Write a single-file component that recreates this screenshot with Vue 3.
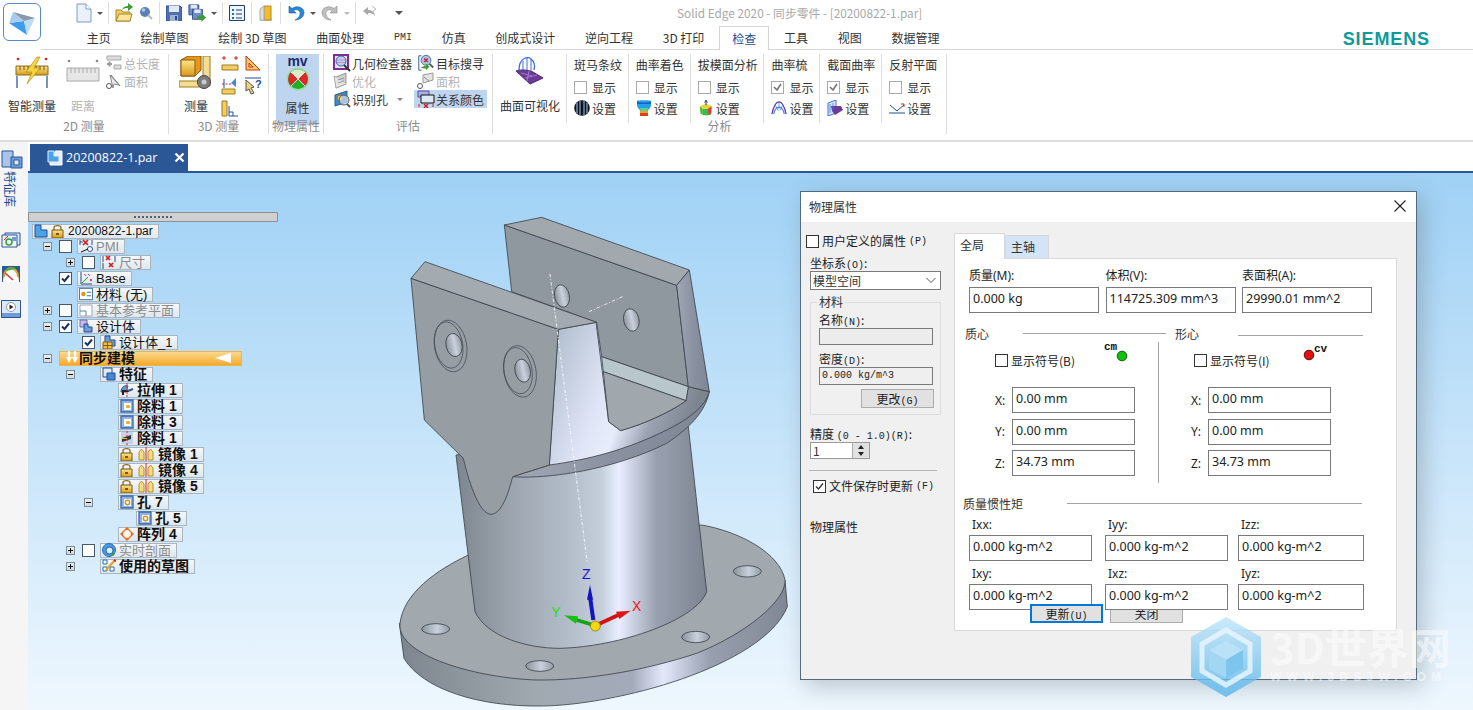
<script setup>
const tabs = ['主页', '绘制草图', '绘制 3D 草图', '曲面处理', 'PMI', '仿真', '创成式设计', '逆向工程', '3D 打印', '检查', '工具', '视图', '数据管理']

const subs = [
  { title: '斑马条纹', w: 62, icon: 'zebra', on: false },
  { title: '曲率着色', w: 62, icon: 'cone', on: false },
  { title: '拔模面分析', w: 74, icon: 'draft', on: false },
  { title: '曲率梳', w: 56, icon: 'comb', on: true },
  { title: '截面曲率', w: 62, icon: 'section', on: true },
  { title: '反射平面', w: 64, icon: 'reflect', on: false }
]

const rows = [
  { i: 0, flat: true, label: '20200822-1.par', icons: ['t-root', 't-lock'] },
  { i: 11, exp: '-', chk: 0, label: 'PMI', dim: true, icons: ['t-pmi'] },
  { i: 34, exp: '+', chk: 0, label: '尺寸', dim: true, icons: ['t-dim'] },
  { i: 11, chk: 1, label: 'Base', icons: ['t-base'] },
  { i: 11, label: '材料 (无)', icons: ['t-mat'] },
  { i: 11, exp: '+', chk: 0, label: '基本参考平面', dim: true, icons: ['t-plane'] },
  { i: 11, exp: '-', chk: 1, label: '设计体', icons: ['t-body'] },
  { i: 34, chk: 1, label: '设计体_1', icons: ['t-body1'] },
  { i: 11, exp: '-', sync: true, label: '同步建模', icons: ['t-sync'] },
  { i: 34, exp: '-', label: '特征', bold: true, icons: ['t-feat'] },
  { i: 52, label: '拉伸 1', bold: true, icons: ['t-ext'] },
  { i: 52, label: '除料 1', bold: true, icons: ['t-cut'] },
  { i: 52, label: '除料 3', bold: true, icons: ['t-cut'] },
  { i: 52, label: '除料 1', bold: true, icons: ['t-cut2'] },
  { i: 52, label: '镜像 1', bold: true, icons: ['t-lock', 't-mir'] },
  { i: 52, label: '镜像 4', bold: true, icons: ['t-lock', 't-mir'] },
  { i: 52, label: '镜像 5', bold: true, icons: ['t-lock', 't-mir'] },
  { i: 52, exp: '-', label: '孔 7', bold: true, icons: ['t-hole'] },
  { i: 70, label: '孔 5', bold: true, icons: ['t-hole'] },
  { i: 52, label: '阵列 4', bold: true, icons: ['t-arr'] },
  { i: 34, exp: '+', chk: 0, label: '实时剖面', dim: true, icons: ['t-live'] },
  { i: 34, exp: '+', label: '使用的草图', bold: true, icons: ['t-sk'] }
]

const coords = [
  { k: 'X:', v: '0.00 mm' },
  { k: 'Y:', v: '0.00 mm' },
  { k: 'Z:', v: '34.73 mm' }
]
</script>

<template>
  <div class="app">
    <svg class="defs" width="0" height="0">
      <defs>
        <linearGradient id="cyl" x1="0" x2="1" y1="0" y2="0">
          <stop offset="0" stop-color="#7d858e" />
          <stop offset=".2" stop-color="#9aa3ac" />
          <stop offset=".45" stop-color="#b3bdc9" />
          <stop offset=".58" stop-color="#c5cedb" />
          <stop offset=".65" stop-color="#e8eeff" />
          <stop offset=".8" stop-color="#99a1b1" />
          <stop offset="1" stop-color="#7c8490" />
        </linearGradient>
        <linearGradient id="hole" x1="0" x2="1" y1="0" y2="0">
          <stop offset="0" stop-color="#8b939c" />
          <stop offset=".55" stop-color="#c9d1dc" />
          <stop offset="1" stop-color="#939ba5" />
        </linearGradient>
        <linearGradient id="edge" x1="0" x2="1" y1="0" y2="0">
          <stop offset="0" stop-color="#7d858e" />
          <stop offset=".35" stop-color="#a0a8b0" />
          <stop offset=".6" stop-color="#a3abbb" />
          <stop offset=".68" stop-color="#e3e9fb" />
          <stop offset=".8" stop-color="#98a0b0" />
          <stop offset="1" stop-color="#808895" />
        </linearGradient>
        <linearGradient id="wedge" x1="0" x2="1" y1="0" y2=".35">
          <stop offset="0" stop-color="#abb8c8" />
          <stop offset=".45" stop-color="#dfe5f6" />
          <stop offset=".6" stop-color="#e8edfc" />
          <stop offset=".78" stop-color="#9ca4b4" />
          <stop offset="1" stop-color="#7c8490" />
        </linearGradient>
        <linearGradient id="side" x1="0" x2="1" y1="0" y2="0">
          <stop offset="0" stop-color="#a0a8b4" />
          <stop offset=".5" stop-color="#8a92a2" />
          <stop offset="1" stop-color="#7e8694" />
        </linearGradient>
        <linearGradient id="amber" x1="0" x2="0" y1="0" y2="1">
          <stop offset="0" stop-color="#fde48a" />
          <stop offset="1" stop-color="#d99a1c" />
        </linearGradient>
        <linearGradient id="hexfill" x1="0" x2="0" y1="0" y2="1">
          <stop offset="0" stop-color="#bfe4f9" />
          <stop offset="1" stop-color="#55b5ea" />
        </linearGradient>

        <symbol id="doc" viewBox="0 0 16 20"><path d="M1 1h9l5 5v13H1z" fill="#eaf1fb" stroke="#7f9cc4" /><path d="M10 1v5h5" fill="#fff" stroke="#7f9cc4" /></symbol>
        <symbol id="open" viewBox="0 0 18 20"><path d="M1 18V7h5l2 2h7v9z" fill="#f3cd62" stroke="#a8842c" /><path d="M1 18l3-7h13l-2 7z" fill="#fae59a" stroke="#a8842c" /><path d="M7 7c1-3 3-4 6-4V0l5 4-5 4V5c-2 0-4 0-6 2z" fill="#3c9d34" /></symbol>
        <symbol id="ball" viewBox="0 0 14 16"><circle cx="6" cy="7" r="5" fill="#5b7fb6" /><circle cx="4.500" cy="5" r="1.800" fill="#b6cbe8" /><path d="M9 10l4 4" stroke="#b8b8b8" stroke-width="2" /></symbol>
        <symbol id="save" viewBox="0 0 16 16"><path d="M0 1h14l2 2v13H0z" fill="#4e6fb0" stroke="#2e4a88" /><path d="M3 1h10v6H3z" fill="#dfe9f8" /><path d="M4 10h8v6H4z" fill="#9cb1d4" /><path d="M9 11h2v4H9z" fill="#2e4a88" /></symbol>
        <symbol id="saves" viewBox="0 0 20 20"><path d="M1 1h11v11H1z" fill="#6f8cc4" stroke="#2e4a88" /><path d="M3 1h7v4H3z" fill="#dfe9f8" /><path d="M5 6h11v11H5z" fill="#6f8cc4" stroke="#2e4a88" /><path d="M7 6h7v4H7z" fill="#dfe9f8" /><path d="M10 13h5v-3l5 5-5 5v-3h-5z" fill="#3c9d34" /></symbol>
        <symbol id="list" viewBox="0 0 16 16"><path d="M.5.500h15v15H.5z" fill="#eef4fb" stroke="#1e3f70" /><path d="M3 4h2v2H3zM3 8h2v2H3zM3 12h2v2H3z" fill="#1e6fb0" /><path d="M7 5h6M7 9h6M7 13h6" stroke="#1e3f70" /></symbol>
        <symbol id="door" viewBox="0 0 16 16"><path d="M2 15h12" stroke="#999" /><path d="M6 1h7v14H6z" fill="#f2bd2c" stroke="#b4871c" /><path d="M6 1L2 4v11l4 0z" fill="#ddd" stroke="#aaa" /></symbol>
        <symbol id="undo" viewBox="0 0 18 16"><path d="M2 1v7h7L6.500 5.500C10 3.500 14 6 13 9.500 12.500 12 10 14 8 15c5 0 9-3 9-7.500C17 2.500 10 0 5 3.500z" fill="#2b86d8" stroke="#1a5ca0" stroke-width=".6" /></symbol>
        <symbol id="redo" viewBox="0 0 18 16"><path d="M16 1v7H9l2.500-2.500C8 3.500 4 6 5 9.500 5.500 12 8 14 10 15c-5 0-9-3-9-7.500C1 2.500 8 0 13 3.500z" fill="#bfbfbf" stroke="#8c8c8c" stroke-width=".6" /></symbol>
        <symbol id="undo2" viewBox="0 0 16 16"><path d="M1 6l5-4v3c4 0 7 2 7 6-1-2-3-3-7-3v2z" fill="#a8a8a8" /><path d="M10 1l4 3-4 3" fill="none" stroke="#bbb" /></symbol>

        <symbol id="smart" viewBox="0 0 34 34"><circle cx="3" cy="3" r="1.300" fill="#c22" /><circle cx="31" cy="3" r="1.300" fill="#c22" /><path d="M1 10h32v9H1z" fill="url(#amber)" stroke="#8a6d1e" /><path d="M5 10v4M9 10v4M13 10v4M17 10v4M21 10v4M25 10v4M29 10v4" stroke="#6b5415" /><path d="M2 20v12M32 20v12" stroke="#1f4e93" stroke-width="1.200" /><path d="M22 1L11 16h6l-5 12 13-16h-6l6-11z" fill="#f6d43a" stroke="#a7841a" stroke-width=".6" /></symbol>
        <symbol id="ruler" viewBox="0 0 34 34"><circle cx="3" cy="5" r="1.300" fill="#888" /><circle cx="31" cy="5" r="1.300" fill="#888" /><path d="M1 12h32v13H1z" fill="#e6e6e6" stroke="#a8a8a8" /><path d="M5 12v5M9 12v5M13 12v5M17 12v5M21 12v5M25 12v5M29 12v5" stroke="#aaa" /></symbol>
        <symbol id="total" viewBox="0 0 16 16"><path d="M1 1h14v4H1zM8 10h7v4H8z" fill="#ddd" stroke="#aaa" /><path d="M1 9h5M3.500 6.500v5" stroke="#999" stroke-width="2" /></symbol>
        <symbol id="area" viewBox="0 0 16 16"><path d="M5 2L14 13" stroke="#777" /><path d="M4 2l9 10-5-1-1 4z" fill="#eee" stroke="#888" /><circle cx="3" cy="13" r="2.500" fill="#fff" stroke="#555" /></symbol>
        <symbol id="m3d" viewBox="0 0 34 34"><path d="M2 4l7-4h13v14l-6 6H2z" fill="#e8951d" stroke="#8c5b10" /><path d="M2 4h14v16H2z" fill="url(#amber)" stroke="#8c5b10" /><path d="M24 0h7v30H24z" fill="#f4dc93" stroke="#9c7a1c" /><path d="M0 25h24v6H0z" fill="#f4dc93" stroke="#9c7a1c" /><circle cx="25" cy="26" r="6.500" fill="#7d7d7d" stroke="#444" /><circle cx="25" cy="26" r="2.500" fill="#ccc" /></symbol>
        <symbol id="m1" viewBox="0 0 18 18"><path d="M1 4h4M13 4h4M3 2v4M15 2v4" stroke="#c22" /><path d="M1 11h16v5H1z" fill="#f3cd62" stroke="#9c7a1c" /></symbol>
        <symbol id="m2" viewBox="0 0 18 18"><path d="M2 2v14h14zM5 9v4h4z" fill="#f3cd62" stroke="#c83020" /></symbol>
        <symbol id="m3" viewBox="0 0 18 18"><path d="M1 7h10" stroke="#c22" stroke-dasharray="2 1.500" /><path d="M3 2v9" stroke="#1f4e93" /><path d="M15 1l-5 5 5 4z" fill="#3c8ad8" /><path d="M1 12h13v5H1z" fill="#f3cd62" stroke="#9c7a1c" /></symbol>
        <symbol id="m4" viewBox="0 0 18 18"><path d="M1 1h16" stroke="#1f4e93" /><path d="M2 3l8 7-3 1 3 5-3 1-2-5-3 2z" fill="#ead17a" stroke="#555" /><text x="11" y="11" font-size="11" font-weight="700" fill="#1f4e93" font-family="Liberation Sans">?</text></symbol>
        <symbol id="m5" viewBox="0 0 18 18"><path d="M1 1h5v15H1z" fill="#f3cd62" stroke="#9c7a1c" /><path d="M8 6v10h9M8 12h4v4" fill="none" stroke="#1f4e93" /></symbol>
        <symbol id="inspect" viewBox="0 0 18 18"><path d="M0 0h16v16H0z" fill="#7d2f8e" /><path d="M2 2h12v12H2z" fill="#dfe7f4" /><circle cx="8" cy="7" r="5" fill="#bcd2ee" stroke="#3c66a8" /><path d="M4 6h8M4 8.500h8" stroke="#d68ac9" /><path d="M11 11l6 6" stroke="#333" stroke-width="2" /></symbol>
        <symbol id="target" viewBox="0 0 18 20"><path d="M1 2h3M1 2v16h3" fill="none" stroke="#1f4e93" /><circle cx="9" cy="7" r="5.500" fill="#aac3e3" stroke="#46688f" /><path d="M7 5l4 4M11 5l-4 4" stroke="#c22" stroke-width="1.500" /><path d="M13 11l4 4" stroke="#555" stroke-width="2" /><path d="M3 15c3-1 4-2 6-2v-2l4 3-4 4v-2c-2 0-4 0-6-1z" fill="#3c9d34" /></symbol>
        <symbol id="opt" viewBox="0 0 18 18"><path d="M3 5l10-4v11L3 16z" fill="#ccc" stroke="#999" /><path d="M3 5l-2-1 2 12 10-4" fill="#e4e4e4" stroke="#aaa" /><path d="M5 8l6-2M5 11l6-2" stroke="#999" /></symbol>
        <symbol id="area2" viewBox="0 0 18 18"><path d="M6 3l10-2v7L6 11z" fill="#e4e4e4" stroke="#999" /><path d="M7 5l5 4" stroke="#888" /><circle cx="3" cy="14" r="2.500" fill="#fff" stroke="#555" /></symbol>
        <symbol id="ident" viewBox="0 0 18 18"><path d="M2 5l12-4v11L2 16z" fill="#3d8bd0" stroke="#245c90" /><circle cx="7" cy="8" r="3" fill="#f0c040" stroke="#a07010" /><circle cx="11" cy="10" r="5" fill="#cfe0f5" fill-opacity=".7" stroke="#555" /><path d="M14 14l3 3" stroke="#555" stroke-width="2" /></symbol>
        <symbol id="rel" viewBox="0 0 18 18"><path d="M1 1h11v6H1z" fill="#a3b4e0" stroke="#5a4aa8" /><path d="M4 5h13v8H4z" fill="#dfe7f4" stroke="#111" /><path d="M7 14l4 4M11 14l-4 4" stroke="#c22" stroke-width="1.500" /><path d="M2 14v3M16 14v3" stroke="#c22" /></symbol>
        <symbol id="mv" viewBox="0 10 24 24"><circle cx="12" cy="22" r="11.500" fill="#7fe07f" fill-opacity=".55" /><circle cx="12" cy="22" r="10" fill="#22b022" /><path d="M12 22L5 15A10 10 0 0 1 19 15z" fill="#dcecc8" /><path d="M12 22L5 15A10 10 0 0 0 5 29zM12 22L19 15A10 10 0 0 1 19 29z" fill="#dc2a2a" /><path d="M5 15l14 14M19 15L5 29" stroke="#f4e8e8" stroke-width="1" /></symbol>
        <symbol id="surf" viewBox="0 0 30 30"><path d="M4 14C4 1 14 0 16 3c4 3 4 7 3 11" fill="none" stroke="#3d6ee0" stroke-width="1.300" /><path d="M8 5v12M12 2v15M16 3v13" stroke="#3d6ee0" /><path d="M1 15c6-2 12-1 17 1l10 6-13 6C10 24 6 19 1 15z" fill="#6b3a9a" stroke="#4a2a70" /><path d="M6 17l11 3 M10 22l12-3M14 15l-2 10" stroke="#9f7fc4" /></symbol>
        <symbol id="zebra" viewBox="0 0 16 16"><circle cx="8" cy="8" r="7.800" fill="#111" /><path d="M3 2.500v11M6 1v14M10 1v14M13 2.500v11" stroke="#7ea4d0" stroke-width="1.300" /></symbol>
        <symbol id="cone" viewBox="0 0 16 16"><path d="M1 1c0-1 14-1 14 0v4c0 3-3 4-3 6H4C4 9 1 8 1 5z" fill="#24a0e8" /><path d="M1 1c2 2 12 2 14 0v3H1z" fill="#1464c8" /><path d="M4 8h8l-.5 3h-7z" fill="#5cd08c" /><path d="M4 11h8v2H4z" fill="#f0a020" /><path d="M4 13h8v3H4z" fill="#d84020" /></symbol>
        <symbol id="draft" viewBox="0 0 16 18"><path d="M1 7l7-3 7 3-1 9-6 2-6-3z" fill="#e6d83a" /><path d="M1 7l3 3v7l-2-2z" fill="#3cc040" /><path d="M4 10h10l-1 7H4z" fill="#2fbe5a" /><path d="M10 10l4-3v8l-3 2z" fill="#e03a3a" /><path d="M8 6V1M6.500 3L8 0l1.500 3" stroke="#113a80" fill="none" /></symbol>
        <symbol id="comb" viewBox="0 0 18 16"><path d="M1 15C3 5 6 1 9 1s6 4 8 14" fill="none" stroke="#5a3ab0" stroke-width="1.400" /><path d="M3 15c1-5 3-8 6-8s5 3 6 8" fill="none" stroke="#4a8ae0" stroke-width="1.300" /><path d="M5 5l3 6M13 5l-3 6M9 1v8" stroke="#3d6ee0" stroke-width=".8" /></symbol>
        <symbol id="section" viewBox="0 0 16 16"><path d="M1 3l8-3v13l-8 3z" fill="#d8e6f8" stroke="#3d6ee0" /><path d="M4 6l10 0 2 4-8 5-3-4z" fill="#6b3a9a" /><path d="M3 4v9M6 3v9" stroke="#3d6ee0" stroke-width=".8" /></symbol>
        <symbol id="reflect" viewBox="0 0 16 16"><path d="M0 13h16" stroke="#1f4e93" /><path d="M1 5l7 6 7-6" fill="none" stroke="#1f4e93" /><path d="M12 4l3 0 0 3" fill="none" stroke="#c22" /></symbol>

        <symbol id="r-feat" viewBox="0 0 22 20"><path d="M1 1h11v16H1z" fill="#a9c4e8" stroke="#2b5797" /><path d="M10 7h11v11H10z" fill="#6f9bd8" stroke="#2b5797" /><path d="M13 10h5v5h-5z" fill="#e0ecfb" stroke="#2b5797" /></symbol>
        <symbol id="r-cam" viewBox="0 0 20 16"><path d="M4 1h15v12H4z" fill="#dbe8f8" stroke="#2b5797" /><path d="M1 3h15v12H1z" fill="#eef4fb" stroke="#2b5797" /><circle cx="8" cy="10" r="3" fill="none" stroke="#3c9d34" stroke-width="1.500" /><path d="M3 8l4-4" stroke="#c22" /><path d="M11 5h4v4h-4z" fill="#6f9bd8" /></symbol>
        <symbol id="r-gauge" viewBox="0 0 20 18"><path d="M1 1h18v16H1z" fill="#2b5797" /><path d="M2 17C2 8 6 4 10 4s8 4 8 13z" fill="#fff" /><path d="M3 12C3 6 7 3 10 3s7 3 7 9" fill="none" stroke="#e8a020" stroke-width="2" /><path d="M5 5L14 3" stroke="#3cb040" stroke-width="2" /><path d="M4 8l8 7" stroke="#d03030" stroke-width="1.500" /></symbol>
        <symbol id="r-play" viewBox="0 0 20 18"><path d="M.5.500h19v17H.5z" fill="#dbe8f8" stroke="#2b5797" /><path d="M1 13h18v4H1z" fill="#6f9bd8" /><circle cx="10" cy="7" r="4.500" fill="#fff" stroke="#999" /><path d="M8.500 4.500l4 2.500-4 2.500z" fill="#222" /></symbol>

        <symbol id="t-root" viewBox="0 0 14 14"><path d="M1 1h6v5h6v7H1z" fill="#4aa3e8" stroke="#1f4e93" /></symbol>
        <symbol id="t-lock" viewBox="0 0 14 14"><path d="M3 6V3.500C3 1 10 1 10 3.500V6" fill="none" stroke="#8a6a20" stroke-width="1.300" /><path d="M1 6h11v8H1z" fill="url(#amber)" stroke="#7a5a10" /><path d="M5 9h3v2H5z" fill="#7a5a10" /></symbol>
        <symbol id="t-pmi" viewBox="0 0 14 14"><path d="M1 1v5M1 3h3M13 1v5" stroke="#1f4e93" /><path d="M4 1l5 5M9 1L4 6" stroke="#d41a1a" stroke-width="1.700" /><circle cx="11" cy="10" r="2.500" fill="#fff" stroke="#1f4e93" /><path d="M2 13l7-3" stroke="#111" /></symbol>
        <symbol id="t-dim" viewBox="0 0 14 14"><path d="M1 1v6M13 1v6M1 8v6" stroke="#1f4e93" /><path d="M4 1l4 4M8 1L4 5M7 8l4 4M11 8l-4 4" stroke="#d41a1a" stroke-width="1.700" /></symbol>
        <symbol id="t-base" viewBox="0 0 14 14"><path d="M2 1v12h11" fill="none" stroke="#1f4e93" /><path d="M2 13l7-7" stroke="#3c9d34" /><path d="M5 3l2 2M9 3l2 2M11 8l2 2M13 8l-2 2" stroke="#c040c0" /></symbol>
        <symbol id="t-mat" viewBox="0 0 16 14"><path d="M.5.500h15v13H.5z" fill="#fff" stroke="#1f5f8f" /><circle cx="5" cy="7" r="2.500" fill="#e89020" /><path d="M9 5h5M9 9h5" stroke="#1f5f8f" /></symbol>
        <symbol id="t-plane" viewBox="0 0 14 14"><path d="M1 2h12v11H1z" fill="#fff" stroke="#9aa8b8" /><path d="M1 8h6v5" fill="none" stroke="#5b82b8" /></symbol>
        <symbol id="t-body" viewBox="0 0 14 14"><path d="M1 1h7v7H1z" fill="#c4bce8" stroke="#6f6ab0" /><path d="M5 5h4v3h4v5H5z" fill="#6f9bd8" stroke="#1f4e93" /></symbol>
        <symbol id="t-body1" viewBox="0 0 14 14"><path d="M3 1h5v4h5v6H3z" fill="#6f9bd8" stroke="#1f4e93" /><path d="M1 7h9v7H1z" fill="#f0c040" stroke="#8a5a10" /><path d="M5.500 7v7M1 10.500h9" stroke="#8a5a10" /></symbol>
        <symbol id="t-sync" viewBox="0 0 14 14"><path d="M4 0v7M10 0v7" stroke="#fff" stroke-width="2" /><path d="M1 6l3 6 3-6zM7 6l3 6 3-6z" fill="#fff" /></symbol>
        <symbol id="t-feat" viewBox="0 0 14 14"><path d="M1 1h9v9H1z" fill="#dfe9f8" stroke="#1f4e93" /><path d="M5 6h8v7H5z" fill="#4a86d8" stroke="#1f4e93" /></symbol>
        <symbol id="t-ext" viewBox="0 0 14 14"><path d="M1 9C1 3 6 2 8 3l-2 6H1z" fill="#5b9bd8" stroke="#2b5797" /><path d="M3 12V8h6" fill="none" stroke="#222" stroke-width="2" /><path d="M8 8l5-2" stroke="#2b5797" stroke-width="2" /><path d="M7 0v14" stroke="#e82020" stroke-dasharray="2 1" /></symbol>
        <symbol id="t-cut" viewBox="0 0 14 14"><path d="M1 1h12v12H1z" fill="#8eb3e4" stroke="#3a66a8" stroke-width="1.300" /><path d="M4 4h7v7H4z" fill="#fff" /><path d="M6 6h4v3H6z" fill="#e8b83a" /></symbol>
        <symbol id="t-cut2" viewBox="0 0 14 14"><path d="M1 1h12v12H1z" fill="#c4d4ea" /><path d="M2 7l9-3v4L2 11z" fill="#333" /><path d="M2 7h5v1H2z" fill="#e8b83a" /><path d="M7 0v14" stroke="#e82020" stroke-dasharray="2 2" /></symbol>
        <symbol id="t-mir" viewBox="0 0 16 14"><path d="M1 13V5l2.500-3L6 5v8zM10 13V5l2.500-3L15 5v8z" fill="#f5dc80" stroke="#a07c1c" stroke-width=".8" /><path d="M8 0v14" stroke="#e82020" /></symbol>
        <symbol id="t-hole" viewBox="0 0 14 14"><path d="M1 1h12v12H1z" fill="#8eb3e4" stroke="#3a66a8" stroke-width="1.300" /><path d="M4 4h7v7H4z" fill="#fff" /><circle cx="7.500" cy="7.500" r="2.200" fill="none" stroke="#c89a24" stroke-width="1.500" /></symbol>
        <symbol id="t-arr" viewBox="0 0 14 14"><path d="M7 1l6 6-6 6-6-6z" fill="#fff5e8" stroke="#e0702a" stroke-width="1.300" /><circle cx="7" cy="2" r="1.300" fill="#e0702a" /><circle cx="7" cy="12" r="1.300" fill="#e0702a" /><circle cx="2" cy="7" r="1.300" fill="#e0702a" /><circle cx="12" cy="7" r="1.300" fill="#e0702a" /></symbol>
        <symbol id="t-live" viewBox="0 0 14 14"><circle cx="7" cy="7" r="6.500" fill="#4a9ae0" stroke="#2b6fb0" /><circle cx="7.500" cy="7.500" r="3.500" fill="#dff0fb" stroke="#1f5f9f" /><circle cx="11" cy="11" r="1.500" fill="#30a040" /></symbol>
        <symbol id="t-sk" viewBox="0 0 14 14"><path d="M1 1h4v4H1zM1 8h4v4H1zM8 8h4v4H8z" fill="#fff" stroke="#1f6fb8" /><path d="M4 11L13 1" stroke="#e8a020" stroke-width="2" /><path d="M12 1l2 1" stroke="#c22" stroke-width="2" /></symbol>
      </defs>
    </svg>

    <header class="top">
      <div class="logo">
        <svg width="30" height="30" viewBox="0 0 30 30">
          <path d="M2 16l15-2 3 14z" fill="#3c9bec" />
          <path d="M6 5l11 9-15 2z" fill="#a9cdf0" />
          <path d="M17 14l11-3-8 17z" fill="#bcdcf6" />
          <path d="M6 5l22 6-11 3z" fill="#8a97a8" />
        </svg>
      </div>
      <div class="top-main">
        <div class="qat">
          <svg class="q" width="16" height="20"><use href="#doc" /></svg><i class="dd" />
          <b class="qs" />
          <svg class="q" width="18" height="20"><use href="#open" /></svg>
          <svg class="q" width="14" height="16"><use href="#ball" /></svg>
          <b class="qs" />
          <svg class="q" width="16" height="16"><use href="#save" /></svg>
          <svg class="q" width="18" height="18"><use href="#saves" /></svg><i class="dd" />
          <b class="qs" />
          <svg class="q" width="16" height="16"><use href="#list" /></svg>
          <b class="qs" />
          <svg class="q" width="16" height="16"><use href="#door" /></svg>
          <b class="qs" />
          <svg class="q" width="18" height="16"><use href="#undo" /></svg><i class="dd" />
          <svg class="q" width="18" height="16"><use href="#redo" /></svg><i class="dd off" />
          <b class="qs" />
          <svg class="q" width="16" height="16"><use href="#undo2" /></svg>
          <i class="dd last" />
          <span class="title">Solid Edge 2020 - 同步零件 - [20200822-1.par]</span>
        </div>
        <nav class="tabs">
          <span v-for="t in tabs" :key="t" class="tab" :class="{ on: t === '检查', pmi: t === 'PMI' }">{{ t }}</span>
          <span class="siemens">SIEMENS</span>
        </nav>
      </div>
    </header>

    <section class="ribbon">
      <div class="group g2d">
        <div class="items">
          <div class="big"><svg width="34" height="34"><use href="#smart" /></svg><span>智能测量</span></div>
          <div class="big off w-dist"><svg width="34" height="34"><use href="#ruler" /></svg><span>距离</span></div>
          <div class="smalls off sm-2d">
            <div class="sm"><svg width="16" height="16"><use href="#total" /></svg>总长度</div>
            <div class="sm"><svg width="16" height="16"><use href="#area" /></svg>面积</div>
          </div>
        </div>
        <div class="glabel">2D 测量</div>
      </div>

      <div class="group g3d">
        <div class="items">
          <div class="big"><svg width="34" height="34"><use href="#m3d" /></svg><span>测量</span></div>
          <div class="mini">
            <svg width="18" height="18"><use href="#m1" /></svg>
            <svg width="18" height="18"><use href="#m2" /></svg>
            <svg width="18" height="18"><use href="#m3" /></svg>
            <svg width="18" height="18"><use href="#m4" /></svg>
            <svg width="18" height="18"><use href="#m5" /></svg>
          </div>
        </div>
        <div class="glabel">3D 测量</div>
      </div>

      <div class="group gphy">
        <div class="items">
          <div class="big active">
            <em class="mv">mv</em>
            <svg width="24" height="24"><use href="#mv" /></svg>
            <span>属性</span>
          </div>
        </div>
        <div class="glabel">物理属性</div>
      </div>

      <div class="group geval">
        <div class="items">
          <div class="smalls">
            <div class="sm"><svg width="18" height="18"><use href="#inspect" /></svg>几何检查器</div>
            <div class="sm off"><svg width="18" height="18"><use href="#opt" /></svg>优化</div>
            <div class="sm"><svg width="18" height="18"><use href="#ident" /></svg>识别孔<i class="dd" /></div>
          </div>
          <div class="smalls col2">
            <div class="sm"><svg width="18" height="18"><use href="#target" /></svg>目标搜寻</div>
            <div class="sm off"><svg width="18" height="18"><use href="#area2" /></svg>面积</div>
            <div class="sm hl"><svg width="18" height="18"><use href="#rel" /></svg>关系颜色</div>
          </div>
        </div>
        <div class="glabel">评估</div>
      </div>

      <div class="group gana">
        <div class="items">
          <div class="sub first">
            <div class="big"><svg width="30" height="30"><use href="#surf" /></svg><span>曲面可视化</span></div>
          </div>
          <div v-for="s in subs" :key="s.title" class="sub" :style="{ width: s.w + 'px' }">
            <div class="sub-title">{{ s.title }}</div>
            <div class="sub-row">
              <span class="cb"><svg v-if="s.on" width="11" height="11" viewBox="0 0 11 11"><path d="M2 5l3 3 4-6" fill="none" stroke="#777" stroke-width="1.600" /></svg></span>显示
            </div>
            <div class="sub-row set"><svg width="16" height="16"><use :href="'#' + s.icon" /></svg>设置</div>
          </div>
        </div>
        <div class="glabel">分析</div>
      </div>
    </section>

    <main class="work">
      <aside class="rail">
        <svg width="22" height="20"><use href="#r-feat" /></svg>
        <div class="rail-txt">特征库</div>
        <svg class="rail-a" width="20" height="16"><use href="#r-cam" /></svg>
        <svg class="rail-b" width="20" height="18"><use href="#r-gauge" /></svg>
        <svg class="rail-b" width="20" height="18"><use href="#r-play" /></svg>
      </aside>

      <div class="doc">
        <div class="doc-tabs">
          <div class="doc-tab">
            <svg width="16" height="16" viewBox="0 0 16 16"><path d="M8 1h7v14H3v-4" fill="#e6edf6" stroke="#fff" /><path d="M1 1h6v5h5v6H1z" fill="#4aa3e8" stroke="#e6edf6" /></svg>
            <span>20200822-1.par</span>
            <svg class="x" width="11" height="11" viewBox="0 0 11 11"><path d="M1.500 1.500l8 8M9.500 1.500l-8 8" stroke="#fff" stroke-width="2.200" /></svg>
          </div>
        </div>

        <div class="canvas">
          <div class="handle"><i /></div>

          <div class="tree">
            <div v-for="(r, n) in rows" :key="n" class="row" :class="{ flat: r.flat }" :style="{ paddingLeft: r.i + 'px' }">
              <template v-if="!r.flat">
                <span class="exp" :class="{ none: !r.exp, plus: r.exp === '+' }" />
                <span class="chk" :class="{ none: r.chk === undefined }">
                  <svg v-if="r.chk" width="11" height="11" viewBox="0 0 11 11"><path d="M2 5.500l2.500 2.500L9 2.500" fill="none" stroke="#17335f" stroke-width="2" /></svg>
                </span>
              </template>
              <span class="node" :class="{ dim: r.dim, bold: r.bold, sync: r.sync }">
                <svg v-for="ic in r.icons" :key="ic" :width="ic === 't-mir' ? 18 : 14" height="14"><use :href="'#' + ic" /></svg>
                <span>{{ r.label }}</span>
                <i v-if="r.sync" class="arrow" />
              </span>
            </div>
          </div>

          <svg class="model" width="420" height="500" viewBox="0 0 1260 1500">
            <g stroke="#3c434a" stroke-width="2.500" stroke-linejoin="round">
              <path d="M58 1240L72 1345C130 1440 300 1490 480 1488C700 1488 1150 1370 1222 1190L1215 1110Z" fill="url(#edge)" />
              <path d="M60 1240C70 1150 170 1080 265 1035L965 945C1080 965 1200 1030 1215 1110C1220 1170 1100 1270 950 1330C800 1380 620 1412 470 1410C300 1405 50 1340 60 1240Z" fill="#a1a8ae" />
              <g fill="url(#hole)">
                <ellipse cx="1102" cy="1084" rx="42" ry="17" />
                <ellipse cx="167" cy="1257" rx="42" ry="16" />
                <ellipse cx="479" cy="1368" rx="42" ry="16" />
                <ellipse cx="947" cy="1281" rx="42" ry="17" />
              </g>
              <path d="M228 735L285 1205C320 1280 440 1315 540 1315C720 1310 950 1230 980 1145L925 650Z" fill="url(#cyl)" />
              <path d="M398 800C500 808 700 780 860 700C920 660 975 610 988 545L925 530L508 765Z" fill="url(#side)" />
              <path d="M535 358L648 337L686 635L722 662C800 640 880 600 918 572L925 530L988 545C975 590 930 625 860 660C740 720 620 750 508 765Z" fill="url(#wedge)" />
              <path d="M373 45L395 245L650 337L665 440L925 530L890 226Z" fill="#8f989e" />
              <path d="M373 45L485 22L928 180L890 226Z" fill="#a2a9ae" />
              <path d="M890 226L928 180L988 545L925 530Z" fill="url(#side)" />
              <path d="M665 440L925 530L918 572L670 485Z" fill="#b9c6cc" />
              <path d="M670 485L918 572C880 600 800 640 722 662L686 635Z" fill="#a0a8ad" />
              <path d="M93 205L133 630L250 745C270 830 300 912 333 913C365 912 385 850 398 800L508 765L535 358Z" fill="#969ea4" />
              <path d="M93 205L135 155L650 337L535 358Z" fill="#a4abb0" />
              <g fill="none" stroke-width="2">
                <ellipse cx="212" cy="408" rx="48" ry="78" transform="rotate(-10 212 408)" />
                <ellipse cx="206" cy="405" rx="42" ry="70" transform="rotate(-10 206 405)" />
                <ellipse cx="420" cy="484" rx="48" ry="78" transform="rotate(-10 420 484)" />
                <ellipse cx="414" cy="482" rx="42" ry="70" transform="rotate(-10 414 482)" />
              </g>
              <g fill="url(#hole)">
                <ellipse cx="222" cy="405" rx="24" ry="35" transform="rotate(-12 222 405)" />
                <ellipse cx="428" cy="482" rx="23" ry="35" transform="rotate(-12 428 482)" />
                <ellipse cx="546" cy="258" rx="22" ry="34" transform="rotate(-12 546 258)" />
                <ellipse cx="754" cy="330" rx="23" ry="34" transform="rotate(-12 754 330)" />
              </g>
            </g>
            <path d="M510 192L622 1060M627 305L732 258" stroke="#fff" stroke-width="2.500" stroke-dasharray="10 6 3 6" fill="none" />
            <path d="M640 1230L630 1160" stroke="#1414c0" stroke-width="12" />
            <path d="M630 1124l-9 45h18z" fill="#1414c0" />
            <path d="M640 1245L590 1230" stroke="#15a015" stroke-width="11" />
            <path d="M552 1216l42 3-6 22z" fill="#15c015" />
            <path d="M650 1245L715 1215" stroke="#d01414" stroke-width="11" />
            <path d="M752 1202l-44 3 10 22z" fill="#e01414" />
            <circle cx="646" cy="1248" r="15" fill="#f4d80c" stroke="#7a6a00" stroke-width="2" />
            <text x="606" y="1106" class="ax" fill="#1414d8">Z</text>
            <text x="514" y="1222" class="ax" fill="#18e018">Y</text>
            <text x="756" y="1204" class="ax" fill="#f01414">X</text>
          </svg>

          <div class="dlg">
            <div class="dlg-title">
              <span>物理属性</span>
              <svg width="14" height="14" viewBox="0 0 14 14"><path d="M1.500 1.500l11 11M12.500 1.500l-11 11" stroke="#222" stroke-width="1.100" /></svg>
            </div>
            <div class="dlg-body">
              <div class="side">
                <label class="lbl chk-line"><span class="box" />用户定义的属性<span class="m">(P)</span></label>
                <div class="lbl cs">坐标系<span class="m">(O)</span>:</div>
                <div class="select">模型空间
                  <svg width="12" height="7" viewBox="0 0 12 7"><path d="M1.500 1L6 5.500 10.500 1" fill="none" stroke="#555" /></svg>
                </div>
                <div class="mat">
                  <span class="legend">材料</span>
                  <div class="lbl">名称<span class="m">(N)</span>:</div>
                  <div class="ro n" />
                  <div class="lbl d">密度<span class="m">(D)</span>:</div>
                  <div class="ro v">0.000 kg/m^3</div>
                  <button class="btn chg">更改<span class="m">(G)</span></button>
                </div>
                <div class="lbl pr">精度 <span class="m">(0 - 1.0)(R)</span>:</div>
                <div class="spin">
                  <span>1</span>
                  <div class="arrows"><i class="u" /><i class="d" /></div>
                </div>
                <hr class="sep" />
                <label class="lbl chk-line save"><span class="box"><svg width="11" height="11" viewBox="0 0 11 11"><path d="M2 5.500l2.500 2.500L9 2.500" fill="none" stroke="#333" stroke-width="1.400" /></svg></span>文件保存时更新<span class="m">(F)</span></label>
                <div class="lbl hint">物理属性</div>
              </div>

              <div class="tabbed">
                <div class="ptabs">
                  <span class="ptab on">全局</span>
                  <span class="ptab">主轴</span>
                </div>
                <div class="panel">
                  <div class="trio">
                    <div><div class="flabel">质量(M):</div><div class="input">0.000 kg</div></div>
                    <div><div class="flabel">体积(V):</div><div class="input">114725.309 mm^3</div></div>
                    <div><div class="flabel">表面积(A):</div><div class="input">29990.01 mm^2</div></div>
                  </div>

                  <div class="heads">
                    <div class="head h1"><span>质心</span><i /></div>
                    <div class="head h2"><span>形心</span><i /></div>
                  </div>
                  <div class="centers">
                    <div class="cen left">
                      <div class="sym">
                        <label class="lbl chk-line"><span class="box" />显示符号(B)</label>
                        <svg width="26" height="24" viewBox="0 0 26 24"><text x="0" y="8" class="mk">cm</text><circle cx="18" cy="14" r="4.800" fill="#12c012" stroke="#0b5c0b" /></svg>
                      </div>
                      <div class="xyz">
                        <template v-for="c in coords" :key="c.k">
                          <span class="k">{{ c.k }}</span><div class="input">{{ c.v }}</div>
                        </template>
                      </div>
                    </div>
                    <div class="cen right">
                      <div class="sym">
                        <label class="lbl chk-line"><span class="box" />显示符号(I)</label>
                        <svg width="26" height="24" viewBox="0 0 26 24"><circle cx="6" cy="13" r="4.800" fill="#e01010" stroke="#5c0b0b" /><text x="11" y="10" class="mk">cv</text></svg>
                      </div>
                      <div class="xyz">
                        <template v-for="c in coords" :key="c.k">
                          <span class="k">{{ c.k }}</span><div class="input">{{ c.v }}</div>
                        </template>
                      </div>
                    </div>
                  </div>

                  <div class="head h3"><span>质量惯性矩</span><i /></div>
                  <div class="moments">
                    <div><div class="flabel">Ixx:</div><div class="input">0.000 kg-m^2</div></div>
                    <div><div class="flabel">Iyy:</div><div class="input">0.000 kg-m^2</div></div>
                    <div><div class="flabel">Izz:</div><div class="input">0.000 kg-m^2</div></div>
                    <div class="low"><div class="flabel">Ixy:</div><div class="input">0.000 kg-m^2</div></div>
                    <div class="low"><div class="flabel">Ixz:</div><div class="input">0.000 kg-m^2</div></div>
                    <div class="low"><div class="flabel">Iyz:</div><div class="input">0.000 kg-m^2</div></div>
                  </div>
                  <div class="actions">
                    <button class="btn act focus">更新<span class="m">(U)</span></button>
                    <button class="btn act">关闭</button>
                  </div>
                </div>
              </div>
            </div>
          </div>

          <div class="mark">
            <svg width="72" height="82" viewBox="0 0 72 82">
              <path d="M36 1l35 20v40L36 81 1 61V21z" fill="url(#hexfill)" fill-opacity=".8" />
              <path d="M36 14l24 14v27L36 69 12 55V28z" fill="none" stroke="#e6f5fd" stroke-opacity=".85" stroke-width="5" />
              <path d="M36 25l17 9-17 10-17-10z" fill="#b9e1f7" />
              <path d="M19 34l17 10v18l-17-9z" fill="#a3d6f3" />
              <path d="M53 34L36 44v18l17-9z" fill="#7cc5ec" />
            </svg>
            <div class="mark-txt">
              <div class="mark-a">3D世界网</div>
              <div class="mark-b">WWW.3DSJW.COM</div>
            </div>
          </div>
        </div>
      </div>
    </main>
  </div>
</template>

<style>
html, body { margin: 0; overflow: hidden; }
</style>

<style scoped>
.app {
  width: 1473px;
  height: 710px;
  display: flex;
  flex-direction: column;
  overflow: hidden;
  background: #fff;
  font-family: "Noto Sans CJK SC", sans-serif;
  font-size: 12px;
  color: #333;
}
.defs { position: absolute; }
svg { flex: none; display: block; }

/* top bar */
.top { display: flex; height: 50px; flex: none; }
.logo {
  width: 36px;
  height: 36px;
  margin: 3px 0 0 3px;
  border: 1px solid #5a8ac6;
  border-radius: 6px;
  display: flex;
  align-items: center;
  justify-content: center;
}
.top-main { flex: 1; display: flex; flex-direction: column; }
.qat { height: 27px; display: flex; align-items: center; padding-left: 35px; position: relative; }
.q { margin-right: 6px; }
.dd {
  width: 0;
  height: 0;
  border: 3px solid transparent;
  border-top: 3px solid #555;
  border-bottom: 0;
  margin: 0 5px 0 -1px;
  flex: none;
}
.dd.off { border-top-color: #bbb; }
.dd.last { margin-left: 11px; border-top-width: 4px; border-left-width: 4px; border-right-width: 4px; }
.qs { width: 1px; height: 22px; background: #ddd; margin: 0 6px 0 0; flex: none; }
.title { position: absolute; left: 636px; top: 4px; color: #a8a8a8; white-space: nowrap; font-size: 11.800px; }
.tabs { height: 23px; display: flex; align-items: center; border-bottom: 1px solid #d5d5d5; padding-left: 31px; position: relative; }
.tab { padding: 0 14.850px; white-space: nowrap; height: 23px; line-height: 24px; color: #333; }
.tab.pmi { font: 10px/24px "Liberation Mono", monospace; }
.tab.on {
  color: #1f4e93;
  background: #fff;
  border: 1px solid #d5d5d5;
  border-bottom: 0;
  padding: 0 12px;
  position: relative;
  top: .500px;
}
.siemens {
  margin-left: auto;
  margin-right: 43px;
  padding-top: 3px;
  color: #0f9a9c;
  font: 700 18px "Liberation Sans", sans-serif;
  letter-spacing: .9px;
}

/* ribbon */
.ribbon {
  height: 92px;
  flex: none;
  display: flex;
  padding-top: 4px;
  box-sizing: border-box;
  border-bottom: 2px solid #dcdcdc;
}
.group { display: flex; flex-direction: column; height: 80px; border-right: 1px solid #dedede; box-sizing: border-box; }
.g2d { width: 169px; }
.g3d { width: 100px; }
.gphy { width: 55px; }
.geval { width: 169px; }
.gana { width: 454px; }
.items { display: flex; height: 64px; }
.glabel { text-align: center; color: #8b8b8b; height: 16px; line-height: 16px; }
.big { display: flex; flex-direction: column; align-items: center; width: 66px; padding-top: 2px; }
.big span { margin-top: 8px; line-height: 16px; white-space: nowrap; }
.off { color: #b3b3b3; }
.g2d .big:first-child { width: 64px; }
.w-dist { width: 38px !important; }
.sm-2d { margin-left: 4px; }
.smalls { display: flex; flex-direction: column; }
.sm { height: 18px; display: flex; align-items: center; gap: 2px; white-space: nowrap; }
.g3d .big { width: 54px; }
.mini { display: grid; grid-template-columns: 18px 18px; gap: 5px; margin-left: -2px; }
.gphy .big.active { width: 43px; height: 71px; margin-left: 7px; background: #bfd5ef; padding-top: 0; }
.mv { font: 700 14px/11px "Liberation Sans", sans-serif; color: #1a2a6a; margin-top: 2px; }
.gphy .big.active span { margin-top: 9px; }
.geval .smalls { padding: 0 0 0 9px; width: 76px; }
.geval .sm { gap: 1px; }
.geval .col2 { padding-left: 8px; width: 72px; }
.geval .dd { margin-left: 8px; border-top-color: #888; }
.hl { background: #bfd5ef; margin-left: -3px; padding-left: 3px; width: 70px; }
.sub { height: 69px; box-sizing: border-box; border-right: 1px solid #dedede; padding-left: 7px; }
.sub:last-child { border-right: 0; }
.sub.first { width: 74px; padding-left: 0; }
.sub.first .big { width: 74px; padding-top: 2px; }
.sub.first .big span { margin-top: 12px; }
.sub-title { height: 16px; line-height: 16px; margin-top: 3px; white-space: nowrap; }
.sub-row { display: flex; align-items: center; gap: 5px; height: 16px; margin-top: 6px; white-space: nowrap; }
.sub-row.set { gap: 2px; margin-top: 5px; }
.cb { width: 11px; height: 11px; border: 1px solid #aaa; background: #fff; display: block; flex: none; }

/* work area */
.work { flex: 1; display: flex; min-height: 0; }
.rail {
  width: 28px;
  background: #f5f5f5;
  flex: none;
  display: flex;
  flex-direction: column;
  align-items: flex-start;
  padding: 8px 0 0 1px;
  box-sizing: border-box;
}
.rail-txt {
  writing-mode: vertical-rl;
  text-orientation: sideways;
  color: #1f4e93;
  margin: 1px 0 0 3px;
  line-height: 12px;
}
.rail-a { margin-top: 25px; }
.rail-b { margin-top: 17px; }
.doc { flex: 1; display: flex; flex-direction: column; min-width: 0; }
.doc-tabs { height: 31px; box-sizing: border-box; padding: 2px 0 0 2px; border-bottom: 2px solid #2b5797; flex: none; }
.doc-tab {
  width: 158px;
  height: 27px;
  background: #2b5797;
  color: #fff;
  display: flex;
  align-items: center;
  box-sizing: border-box;
  padding-left: 17px;
  font: 12.500px "Open Sans", sans-serif;
}
.doc-tab span { margin-left: 3px; }
.doc-tab .x { margin-left: auto; margin-right: 3px; }
.canvas {
  flex: 1;
  position: relative;
  background: linear-gradient(#9fd1f5, #eef7fe);
  overflow: hidden;
}
.handle {
  width: 248px;
  height: 8px;
  margin-top: 39px;
  background: #cfd0d1;
  border: 1px solid #8f8f8f;
  box-sizing: content-box;
  border-radius: 1px;
  display: flex;
  align-items: center;
  justify-content: center;
}
.handle i { width: 38px; height: 2px; background: repeating-linear-gradient(90deg, #555d73 0 2px, transparent 2px 4px); }

/* tree */
.tree { position: absolute; left: 4px; top: 49px; }
.row { display: flex; align-items: center; height: 16px; }
.row.flat { height: 14px; margin-top: 2px; }
.exp {
  width: 9px;
  height: 9px;
  border: 1px solid #7c8b99;
  background: linear-gradient(#eee, #d4d9de);
  box-sizing: border-box;
  position: relative;
  margin-right: 7px;
  flex: none;
}
.exp::before { content: ""; position: absolute; left: 1px; right: 1px; top: 3px; height: 1px; background: #111; }
.exp.plus::after { content: ""; position: absolute; top: 1px; bottom: 1px; left: 3px; width: 1px; background: #111; }
.chk {
  width: 13px;
  height: 13px;
  border: 1px solid #46586a;
  background: #fff;
  box-sizing: border-box;
  margin-right: 5px;
  flex: none;
  display: flex;
  align-items: center;
  justify-content: center;
}
.none { visibility: hidden; }
.node {
  display: flex;
  align-items: center;
  gap: 3px;
  height: 15px;
  padding: 0 2px 0 1px;
  box-sizing: border-box;
  border: 1px solid #a9b6c1;
  background: linear-gradient(#f5f8fa, #dfe7ed);
  white-space: nowrap;
  color: #111;
  font-family: "Liberation Sans", "Noto Sans CJK SC", sans-serif;
}
.node span { display: block; line-height: 13px; margin-right: 3px; font-size: 13px; }
.row.flat .node span { font-size: 12px; }
.node.dim { color: #8c8c8c; }
.node.bold span { font-weight: 700; font-size: 14px; }
.node.sync {
  width: 183px;
  background: linear-gradient(#fbd98d, #f3aa2c);
  border-color: #f2b342;
  position: relative;
  margin-left: -18px;
  padding-left: 5px;
  gap: 0;
}
.node.sync span { font-weight: 700; font-size: 14px; }
.arrow {
  position: absolute;
  right: 10px;
  top: 1px;
  width: 0;
  height: 0;
  border: 5px solid transparent;
  border-right: 16px solid #fff;
  border-left: 0;
}

/* model */
.model { position: absolute; left: 352px; top: 37px; }
.ax { font: 42px "Liberation Sans", sans-serif; }

/* dialog */
.dlg {
  position: absolute;
  left: 772px;
  top: 18px;
  width: 617px;
  height: 489px;
  box-sizing: border-box;
  border: 1px solid #53697d;
  background: #f0f0f0;
  box-shadow: 6px 6px 22px rgba(70, 80, 90, .3);
}
.dlg-title {
  height: 30px;
  box-sizing: border-box;
  background: #fff;
  display: flex;
  align-items: center;
  justify-content: space-between;
  padding: 0 9px 2px 8px;
  color: #333;
}
.dlg-body { display: flex; padding: 11px 0 0 5px; }
.side { width: 148px; flex: none; }
.lbl { display: block; height: 16px; line-height: 16px; color: #222; white-space: nowrap; }
.m { font: 10px "Liberation Mono", monospace; }
.chk-line { display: flex; align-items: center; gap: 3px; }
.box {
  width: 13px;
  height: 13px;
  box-sizing: border-box;
  border: 1px solid #333;
  background: #fff;
  flex: none;
  display: flex;
  align-items: center;
  justify-content: center;
}
.cs { margin: 6px 0 0 4px; }
.select {
  margin: 0 0 0 4px;
  width: 131px;
  height: 19px;
  box-sizing: border-box;
  border: 1px solid #7a7a7a;
  background: #fff;
  display: flex;
  align-items: center;
  justify-content: space-between;
  padding: 0 3px 0 2px;
}
.mat {
  margin: 12px 0 0 4px;
  width: 131px;
  height: 113px;
  box-sizing: border-box;
  border: 1px solid #dcdcdc;
  padding: 0 7px 0 8px;
}
.legend { display: block; width: max-content; background: #f0f0f0; padding: 0 2px; margin: -9px 0 0 -2px; height: 16px; line-height: 16px; }
.mat .lbl { margin-top: 2px; }
.mat .lbl.d { margin-top: 6px; }
.ro { height: 17px; box-sizing: border-box; border: 1px solid #7a7a7a; background: #efefef; }
.ro.n { background: #ececec; }
.ro.v { height: 18px; font: 10px/16px "Liberation Mono", monospace; padding-left: 2px; color: #222; }
.btn {
  background: #e1e1e1;
  border: 1px solid #adadad;
  font: 12px "Noto Sans CJK SC", sans-serif;
  color: #222;
  padding: 0;
  display: block;
}
.chg { width: 73px; height: 19px; margin: 4px 0 0 42px; line-height: 17px; }
.pr { margin: 11px 0 0 4px; }
.spin {
  margin: 0 0 0 4px;
  width: 60px;
  height: 17px;
  display: flex;
  box-sizing: border-box;
  border: 1px solid #9a9a9a;
  background: #fff;
  line-height: 15px;
  padding-left: 2px;
  justify-content: space-between;
}
.arrows { width: 16px; background: #e1e1e1; border-left: 1px solid #aaa; display: flex; flex-direction: column; align-items: center; justify-content: space-evenly; }
.arrows i { width: 0; height: 0; border: 3px solid transparent; }
.arrows .u { border-top: 0; border-bottom: 4px solid #222; }
.arrows .d { border-bottom: 0; border-top: 4px solid #222; }
.sep { border: 0; border-top: 1px solid #b5b5b5; margin: 11px 0 0 3px; width: 128px; }
.save { margin: 7px 0 0 7px; }
.hint { margin: 25px 0 0 4px; }

.tabbed { width: 443px; flex: none; }
.ptabs { display: flex; height: 25px; align-items: flex-end; position: relative; }
.ptab {
  width: 44px;
  height: 23px;
  line-height: 21px;
  box-sizing: border-box;
  border: 1px solid #d9d9d9;
  border-bottom: 0;
  background: #d2e4f5;
  padding-left: 5px;
}
.ptab.on { width: 51px; height: 26px; background: #fff; margin-bottom: -1px; position: relative; z-index: 1; }
.panel {
  height: 373px;
  box-sizing: border-box;
  background: #fff;
  border: 1px solid #d9d9d9;
  padding: 9px 0 0 14px;
}
.flabel { height: 16px; line-height: 16px; font-family: "Noto Sans", "Noto Sans CJK SC", sans-serif; color: #222; white-space: nowrap; }
.input {
  height: 26px;
  box-sizing: border-box;
  border: 1px solid #7a7a7a;
  background: #fff;
  font: 12.500px/21px "Noto Sans", sans-serif;
  padding-left: 3px;
  color: #222;
  white-space: nowrap;
}
.trio { display: grid; grid-template-columns: repeat(3, 130px); column-gap: 6.500px; }
.trio .flabel { margin-bottom: 3px; }
.heads { display: flex; margin: 13px 0 0 -4px; height: 16px; }
.head { display: flex; align-items: center; }
.head span { white-space: nowrap; line-height: 16px; }
.head i { height: 1px; background: #a5a5a5; display: block; }
.h1 { width: 210px; }
.h1 i { width: 143px; margin-left: 34px; margin-top: -2px; }
.h2 i { width: 125px; margin-left: 39px; margin-top: 3px; }
.h3 { margin: 13px 0 0 -6px; height: 16px; }
.h3 i { width: 295px; margin-left: 44px; margin-top: -2px; }
.centers { display: flex; margin-left: -4px; height: 141px; }
.cen { box-sizing: border-box; }
.cen.left { width: 194px; border-right: 1px solid #a5a5a5; padding-left: 30px; }
.cen.right { padding-left: 35px; }
.sym { display: flex; justify-content: space-between; height: 25px; width: 135px; }
.sym .chk-line { align-self: flex-end; height: 13px; }
.mk { font: 700 11px "Liberation Mono", monospace; fill: #111; }
.xyz {
  display: grid;
  grid-template-columns: 17px 123px;
  grid-auto-rows: 26px;
  row-gap: 5.500px;
  margin-top: 20px;
  align-items: center;
}
.cen.right .xyz { margin-left: -3px; }
.k { font-family: "Noto Sans", sans-serif; color: #222; }
.moments { display: grid; grid-template-columns: 123px 123px 123px; column-gap: 13px; row-gap: 5px; margin-top: 5px; }
.moments > div:nth-child(3n) { margin-left: -3px; }
.moments .flabel { margin: 0 0 2px 3px; }
.moments .low { position: relative; z-index: 1; }
.actions { display: flex; gap: 7px; margin: -6px 0 0 61px; }
.act { width: 73px; height: 19px; line-height: 15px; }
.focus { border: 2px solid #0078d7; position: relative; z-index: 2; }

/* watermark */
.mark {
  position: absolute;
  left: 1162px;
  top: 443px;
  display: flex;
  pointer-events: none;
}
.mark-txt { margin-left: 8px; color: #fff; }
.mark-a { font: 700 42px/44px "Noto Sans CJK SC", sans-serif; opacity: .5; margin-top: 8px; white-space: nowrap; }
.mark-b { font: 700 12px/14px "Liberation Sans", sans-serif; letter-spacing: 5.200px; opacity: .5; margin-top: 2px; white-space: nowrap; }
</style>
